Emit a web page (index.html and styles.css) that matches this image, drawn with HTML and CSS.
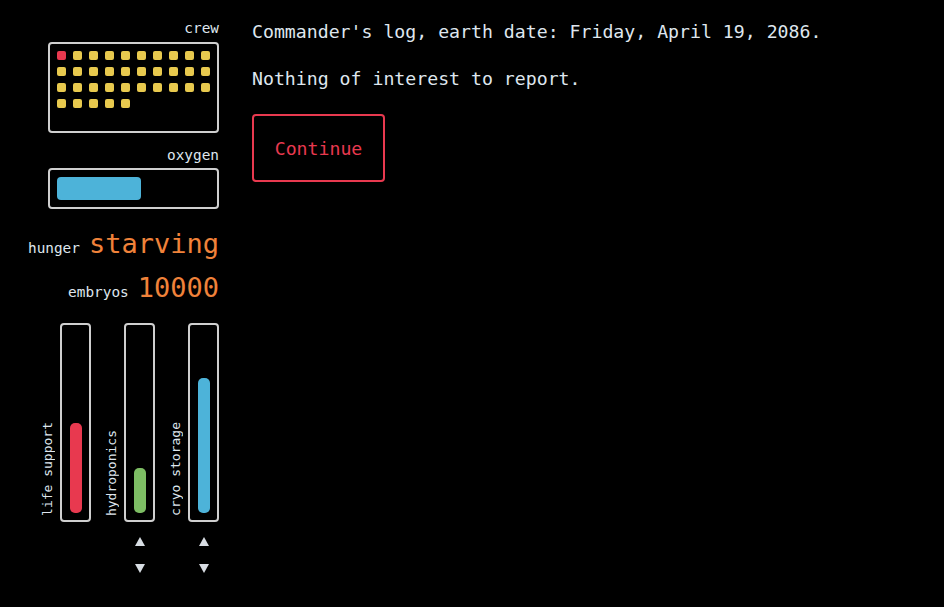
FILE: index.html
```html
<!DOCTYPE html>
<html>
<head>
<meta charset="utf-8">
<link rel="stylesheet" href="styles.css">
</head>
<body>
<div class="app">
  <aside class="sidebar">
    <div class="label">crew</div>
    <div class="panel crew">
      <span class="pip dead"></span><span class="pip"></span><span class="pip"></span><span class="pip"></span><span class="pip"></span><span class="pip"></span><span class="pip"></span><span class="pip"></span><span class="pip"></span><span class="pip"></span>
      <span class="pip"></span><span class="pip"></span><span class="pip"></span><span class="pip"></span><span class="pip"></span><span class="pip"></span><span class="pip"></span><span class="pip"></span><span class="pip"></span><span class="pip"></span>
      <span class="pip"></span><span class="pip"></span><span class="pip"></span><span class="pip"></span><span class="pip"></span><span class="pip"></span><span class="pip"></span><span class="pip"></span><span class="pip"></span><span class="pip"></span>
      <span class="pip"></span><span class="pip"></span><span class="pip"></span><span class="pip"></span><span class="pip"></span>
    </div>
    <div class="label oxy-label">oxygen</div>
    <div class="panel oxygen">
      <div class="oxy-bar" style="width:84px"></div>
    </div>
    <div class="stat hunger"><span class="stat-label">hunger</span><span class="stat-value">starving</span></div>
    <div class="stat embryos"><span class="stat-label">embryos</span><span class="stat-value">10000</span></div>
    <div class="systems">
      <div class="system">
        <div class="gauge-row">
          <div class="vlabel">life support</div>
          <div class="gauge"><div class="fill red" style="height:90px"></div></div>
        </div>
      </div>
      <div class="system">
        <div class="gauge-row">
          <div class="vlabel">hydroponics</div>
          <div class="gauge"><div class="fill green" style="height:45px"></div></div>
        </div>
        <div class="arrows">
          <button class="arrow"><svg width="10" height="9" viewBox="0 0 10 9"><polygon points="5,0 10,9 0,9"/></svg></button>
          <button class="arrow"><svg width="10" height="9" viewBox="0 0 10 9"><polygon points="0,0 10,0 5,9"/></svg></button>
        </div>
      </div>
      <div class="system">
        <div class="gauge-row">
          <div class="vlabel">cryo storage</div>
          <div class="gauge"><div class="fill blue" style="height:135px"></div></div>
        </div>
        <div class="arrows">
          <button class="arrow"><svg width="10" height="9" viewBox="0 0 10 9"><polygon points="5,0 10,9 0,9"/></svg></button>
          <button class="arrow"><svg width="10" height="9" viewBox="0 0 10 9"><polygon points="0,0 10,0 5,9"/></svg></button>
        </div>
      </div>
    </div>
  </aside>
  <main class="main">
    <p class="line">Commander's log, earth date: Friday, April 19, 2086.</p>
    <p class="line">Nothing of interest to report.</p>
    <button class="continue">Continue</button>
  </main>
</div>
</body>
</html>
```

FILE: styles.css
```css
html, body {
  margin: 0;
  padding: 0;
  background: #000;
  height: 100%;
}
body {
  font-family: "DejaVu Sans Mono", "Liberation Mono", monospace;
  color: #dfe6ee;
}
.app {
  display: flex;
  gap: 33px;
  padding-top: 19px;
}
.sidebar {
  width: 219px;
  display: flex;
  flex-direction: column;
  align-items: flex-end;
}
.label {
  font-size: 14.4px;
  line-height: 18px;
  margin-bottom: 5px;
}
.oxy-label {
  margin-top: 13px;
  margin-bottom: 4px;
}
.panel {
  box-sizing: border-box;
  width: 171px;
  border: 2px solid #cfcfcf;
  border-radius: 4px;
}
.crew {
  height: 91px;
  padding: 7px;
  display: grid;
  grid-template-columns: repeat(10, 9px);
  grid-auto-rows: 9px;
  gap: 7px;
  align-content: start;
}
.pip {
  width: 9px;
  height: 9px;
  border-radius: 2px;
  background: #e8c94e;
}
.pip.dead {
  background: #e8394f;
}
.oxygen {
  height: 41px;
  padding: 7px;
}
.oxy-bar {
  height: 100%;
  border-radius: 4px;
  background: #4db3d9;
}
.stat {
  display: flex;
  align-items: baseline;
  gap: 9px;
  color: #dfe6ee;
}
.stat-label {
  font-size: 14.4px;
}
.stat-value {
  font-size: 27px;
  line-height: 36px;
  color: #f0823a;
}
.hunger {
  margin-top: 17px;
}
.embryos {
  margin-top: 8px;
}
.systems {
  display: flex;
  gap: 14px;
  margin-top: 17px;
}
.system {
  display: flex;
  flex-direction: column;
  align-items: flex-end;
}
.gauge-row {
  display: flex;
  gap: 5px;
}
.vlabel {
  writing-mode: vertical-rl;
  transform: rotate(180deg);
  font-size: 13px;
  line-height: 14px;
  width: 14px;
  align-self: flex-end;
  margin-bottom: 6px;
  white-space: nowrap;
}
.gauge {
  box-sizing: border-box;
  width: 31px;
  height: 199px;
  border: 2px solid #cfcfcf;
  border-radius: 4px;
  padding: 7px;
  display: flex;
  align-items: flex-end;
  justify-content: center;
}
.fill {
  width: 12px;
  border-radius: 5px;
}
.fill.red { background: #e8394f; }
.fill.green { background: #7dbd64; }
.fill.blue { background: #4db3d9; }
.arrows {
  width: 31px;
  display: flex;
  flex-direction: column;
  align-items: center;
  gap: 9px;
  margin-top: 10px;
}
.arrow {
  background: none;
  border: 0;
  padding: 0;
  width: 18px;
  height: 18px;
  display: flex;
  align-items: center;
  justify-content: center;
  cursor: pointer;
}
.arrow svg {
  fill: #d8dde3;
  display: block;
}
.main {
  flex: 1;
  margin-top: -1px;
}
.line {
  margin: 0 0 20px 0;
  font-size: 18.2px;
  line-height: 27px;
}
.continue {
  margin-top: 2px;
  box-sizing: border-box;
  width: 133px;
  height: 68px;
  background: #000;
  border: 2px solid #e8394f;
  border-radius: 4px;
  color: #e8394f;
  font-family: "DejaVu Sans Mono", "Liberation Mono", monospace;
  font-size: 18.2px;
  padding: 0;
  cursor: pointer;
}
```
